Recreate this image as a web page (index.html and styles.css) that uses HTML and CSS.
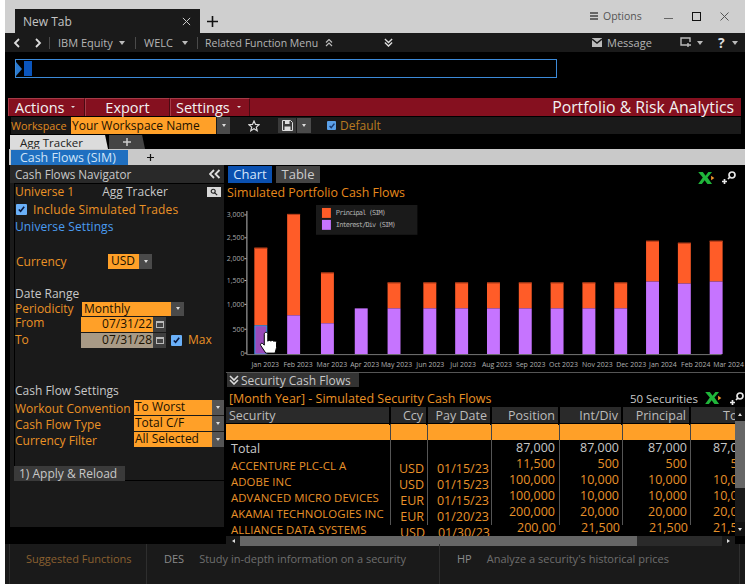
FILE: index.html
```html
<!DOCTYPE html>
<html lang="en">
<head>
<meta charset="utf-8">
<title>Portfolio &amp; Risk Analytics</title>
<link rel="stylesheet" href="styles.css">
</head>
<body>
<div class="app">
  <header class="titlebar">
    <div class="newtab"><span>New Tab</span><svg class="tabx" viewBox="0 0 10 10"><path d="M1 1l8 8M9 1l-8 8"/></svg></div>
    <svg class="plus" viewBox="0 0 11 11"><path d="M5.500 0v11M0 5.500h11"/></svg>
    <div class="winctl">
      <svg class="burger" viewBox="0 0 8 8"><path d="M0 1h8M0 4h8M0 7h8"/></svg>
      <span class="options">Options</span>
      <span class="min"></span>
      <span class="max"></span>
      <svg class="close" viewBox="0 0 9 9"><path d="M.5.5l8 8M8.500.5l-8 8"/></svg>
    </div>
  </header>

  <nav class="navbar">
    <svg class="chev" viewBox="0 0 8 10"><path d="M6 1L2 5l4 4"/></svg>
    <svg class="chev chev2" viewBox="0 0 8 10"><path d="M2 1l4 4-4 4"/></svg>
    <i class="nsep s1"></i>
    <span class="nt nt1">IBM Equity</span><b class="caret c1"></b>
    <i class="nsep s2"></i>
    <span class="nt nt2">WELC</span><b class="caret c2"></b>
    <i class="nsep s3"></i>
    <span class="nt nt3">Related Function Menu</span>
    <svg class="dbl d1" viewBox="0 0 8 8"><path d="M1 3.500l3-3 3 3M1 7l3-3 3 3"/></svg>
    <svg class="dbl d2" viewBox="0 0 10 10"><path d="M1 1l4 4 4-4M1 5l4 4 4-4"/></svg>
    <svg class="env" viewBox="0 0 10 9"><path d="M0 0h10v9H0z" fill="#bbb"/><path d="M0 1l5 4 5-4" fill="none" stroke="#1a1a1a" stroke-width="1.400"/></svg>
    <span class="nt nt4">Message</span>
    <svg class="share" viewBox="0 0 12 11"><path d="M8 8H1V1h9v4M8 6v4M6 8h5" fill="none" stroke="#bbb" stroke-width="1.400"/></svg>
    <b class="caret c3"></b>
    <span class="help">?</span>
    <b class="caret c4"></b>
  </nav>

  <div class="cmdarea">
    <div class="cmd"><b class="cmdtri"></b><b class="cmdblock"></b></div>
  </div>

  <div class="redbar">
    <div class="rbtn rb1">Actions<b class="mini"></b></div>
    <div class="rbtn rb2">Export</div>
    <div class="rbtn rb3">Settings<b class="mini"></b></div>
    <div class="apptitle">Portfolio &amp; Risk Analytics</div>
  </div>

  <div class="wsbar">
    <span class="wslabel">Workspace</span>
    <span class="field wsfield">Your Workspace Name</span><b class="drop wsdrop"></b>
    <svg class="star" viewBox="0 0 12 12"><path d="M6 1l1.500 3.400 3.600.3-2.800 2.400.9 3.600L6 8.800l-3.200 1.900.9-3.600L.9 4.700l3.600-.3z"/></svg>
    <span class="savebtn"><svg viewBox="0 0 11 11"><path d="M.5.500h8l2 2v8H.5z" fill="#3a3a3a" stroke="#ddd"/><path d="M3 1h4.500v3H3z" fill="#ddd"/><path d="M2.500 6.500h6V10h-6z" fill="#ddd"/></svg></span>
    <b class="drop savedrop"></b>
    <span class="check small"><svg viewBox="0 0 10 10"><path d="M2 5l2 2 4-5"/></svg></span>
    <span class="wsdefault">Default</span>
  </div>

  <div class="tabsrow">
    <div class="tab1">Agg Tracker</div>
    <div class="tab2"><svg viewBox="0 0 8 8"><path d="M4 0v8M0 4h8"/></svg></div>
  </div>
  <div class="subrow">
    <div class="subtab">Cash Flows (SIM)</div>
    <svg class="subplus" viewBox="0 0 7 7"><path d="M3.500 0v7M0 3.500h7"/></svg>
  </div>

  <main class="main">
    <aside class="navpanel">
      <div class="navhead"><span>Cash Flows Navigator</span>
        <svg class="collapse" viewBox="0 0 12 10"><path d="M5 1L1 5l4 4M10.500 1l-4 4 4 4"/></svg>
      </div>
      <div class="navbody">
        <div class="r r-univ"><span class="or">Universe 1</span><span class="wh aggname">Agg Tracker</span>
          <span class="searchbtn"><svg viewBox="0 0 10 10"><circle cx="4" cy="4" r="2.500"/><path d="M6 6l3 3"/></svg></span></div>
        <div class="r r-inc"><span class="check"><svg viewBox="0 0 10 10"><path d="M2 5l2 2 4-5"/></svg></span><span class="or">Include Simulated Trades</span></div>
        <div class="r r-uset"><span class="bl">Universe Settings</span></div>
        <div class="r r-cur"><span class="or lab-cur">Currency</span><span class="field usd">USD</span><b class="drop"></b></div>
        <div class="r r-dr"><span class="wh">Date Range</span></div>
        <div class="r r-per"><span class="or lab-per">Periodicity</span><span class="field monthly">Monthly</span><b class="drop"></b></div>
        <div class="r r-date"><span class="or lab-from">From</span><span class="field datef">07/31/22</span><span class="cal"><svg viewBox="0 0 8 8"><path d="M0 1h8v7H0z" fill="#bbb"/><path d="M1 3h6v4H1z" fill="#444"/></svg></span></div>
        <div class="r r-date"><span class="or lab-from lab-to">To</span><span class="field datef tan">07/31/28</span><span class="cal"><svg viewBox="0 0 8 8"><path d="M0 1h8v7H0z" fill="#bbb"/><path d="M1 3h6v4H1z" fill="#444"/></svg></span>
          <span class="check maxc"><svg viewBox="0 0 10 10"><path d="M2 5l2 2 4-5"/></svg></span><span class="or maxl">Max</span></div>
        <div class="r r-cfs"><span class="wh">Cash Flow Settings</span></div>
        <div class="r r-sel"><span class="or lab-sel">Workout Convention</span><span class="field sel">To Worst</span><b class="drop"></b></div>
        <div class="r r-sel"><span class="or lab-sel">Cash Flow Type</span><span class="field sel">Total C/F</span><b class="drop"></b></div>
        <div class="r r-sel"><span class="or lab-sel">Currency Filter</span><span class="field sel">All Selected</span><b class="drop"></b></div>
        <div class="applyrow"><span class="apply">1) Apply &amp; Reload</span></div>
      </div>
    </aside>

    <section class="rightpanel">
      <div class="viewtabs">
        <span class="vt vt-on">Chart</span><span class="vt">Table</span>
        <svg class="xl xl-top" viewBox="0 0 18 13"><path d="M0 0h5l3 4 3-4h4l-5 6 5 7h-5l-3-4-3 4H0l5-7z" fill="#1fb53a"/><path d="M14 4l3.500 2.500-3.500 2.500z" fill="#f0962a"/></svg>
        <svg class="zoomi zi-top" viewBox="0 0 15 13"><circle cx="10" cy="4" r="3"/><path d="M7.800 6.200L6 8M0 10.500h5M2.500 8v5"/></svg>
      </div>
      <div class="charttitle">Simulated Portfolio Cash Flows</div>
      <svg class="chart" viewBox="226 201 519 172">
        <g class="ylab">
          <text x="243" y="217.500">3,000</text><text x="243" y="240.500">2,500</text><text x="243" y="261.500">2,000</text><text x="243" y="283.500">1,500</text><text x="243" y="307.500">1,000</text><text x="243" y="332.500">500</text><text x="243" y="356.500">0</text>
        </g>
        <path class="axis" d="M245.500 211V355M243 215h2M243 238h2M243 259h2M243 281h2M243 305h2M243 330h2M243 354h2"/>
        <g class="or-bars">
          <rect x="253" y="248" width="13" height="78"/><rect x="286" y="214" width="13" height="102"/><rect x="320" y="273" width="13" height="51"/>
          <rect x="387" y="283" width="13" height="26"/><rect x="423" y="283" width="13" height="26"/><rect x="455" y="283" width="13" height="26"/><rect x="487" y="283" width="13" height="26"/><rect x="519" y="283" width="13" height="26"/><rect x="551" y="283" width="13" height="26"/><rect x="583" y="283" width="13" height="26"/><rect x="615" y="283" width="13" height="26"/>
          <rect x="647" y="241" width="13" height="41"/><rect x="679" y="243" width="13" height="41"/><rect x="711" y="241" width="13" height="41"/>
        </g>
        <g class="tops">
          <rect x="253" y="248" width="13" height="1"/><rect x="286" y="214" width="13" height="1"/><rect x="320" y="273" width="13" height="1"/>
          <rect x="387" y="283" width="13" height="1"/><rect x="423" y="283" width="13" height="1"/><rect x="455" y="283" width="13" height="1"/><rect x="487" y="283" width="13" height="1"/><rect x="519" y="283" width="13" height="1"/><rect x="551" y="283" width="13" height="1"/><rect x="583" y="283" width="13" height="1"/><rect x="615" y="283" width="13" height="1"/>
          <rect x="647" y="241" width="13" height="1"/><rect x="679" y="243" width="13" height="1"/><rect x="711" y="241" width="13" height="1"/>
        </g>
        <g class="pu-bars">
          <rect x="286" y="316" width="13" height="39"/><rect x="320" y="324" width="13" height="31"/><rect x="354" y="309" width="13" height="46"/>
          <rect x="387" y="309" width="13" height="46"/><rect x="423" y="309" width="13" height="46"/><rect x="455" y="309" width="13" height="46"/><rect x="487" y="309" width="13" height="46"/><rect x="519" y="309" width="13" height="46"/><rect x="551" y="309" width="13" height="46"/><rect x="583" y="309" width="13" height="46"/><rect x="615" y="309" width="13" height="46"/>
          <rect x="647" y="282" width="13" height="73"/><rect x="679" y="284" width="13" height="71"/><rect x="711" y="282" width="13" height="73"/>
        </g>
        <rect class="selbar" x="253.500" y="326.500" width="12" height="28.500"/>
        <path class="axis2" d="M245 355.500H723"/>
        <g class="xlab">
          <text x="264" y="367.500">Jan 2023</text><text x="297" y="367.500">Feb 2023</text><text x="331" y="367.500">Mar 2023</text><text x="364" y="367.500">Apr 2023</text><text x="396" y="367.500">May 2023</text><text x="430" y="367.500">Jun 2023</text><text x="463" y="367.500">Jul 2023</text><text x="497" y="367.500">Aug 2023</text><text x="531" y="367.500">Sep 2023</text><text x="564" y="367.500">Oct 2023</text><text x="598" y="367.500">Nov 2023</text><text x="632" y="367.500">Dec 2023</text><text x="664" y="367.500">Jan 2024</text><text x="697" y="367.500">Feb 2024</text><text x="730" y="367.500">Mar 2024</text>
        </g>
        <rect class="legbox" x="315" y="205" width="102" height="30"/>
        <rect class="sw-or" x="321" y="208" width="9" height="10"/><rect class="sw-pu" x="321" y="220" width="9" height="10"/>
        <text class="legt" x="335" y="215.500">Principal (SIM)</text><text class="legt" x="335" y="227.500">Interest/Div (SIM)</text>
        <path class="hand" d="M263 335c0-2.500 3.500-2.500 3.500 0v7c1-1 2.500-1 3 0 .8-1 2.500-1 3 .2 1-.6 2.800-.2 2.800 1.300v5l-1.500 5.500H264.500l-5-7.500c-1-2 1-3 2-2l1.500 1.500z"/>
      </svg>
      <div class="sechead"><span class="secbtn"><svg viewBox="0 0 10 10"><path d="M1 1l4 4 4-4M1 5l4 4 4-4"/></svg>Security Cash Flows</span></div>
      <div class="sectitle"><span class="st">[Month Year] - Simulated Security Cash Flows</span><span class="count">50 Securities</span>
        <svg class="xl xl-sec" viewBox="0 0 18 13"><path d="M0 0h5l3 4 3-4h4l-5 6 5 7h-5l-3-4-3 4H0l5-7z" fill="#1fb53a"/><path d="M14 4l3.500 2.500-3.500 2.500z" fill="#f0962a"/></svg>
        <svg class="zoomi zi-sec" viewBox="0 0 15 13"><circle cx="10" cy="4" r="3"/><path d="M7.800 6.200L6 8M0 10.500h5M2.500 8v5"/></svg>
      </div>
      <div class="tablewrap">
        <div class="table">
          <div class="row head"><span class="c sec">Security</span><span class="c ccy">Ccy</span><span class="c pay">Pay Date</span><span class="c pos">Position</span><span class="c int">Int/Div</span><span class="c pri">Principal</span><span class="c tot">Total</span></div>
          <div class="row filter"><span class="c sec"></span><span class="c ccy"></span><span class="c pay"></span><span class="c pos"></span><span class="c int"></span><span class="c pri"></span><span class="c tot"></span></div>
          <div class="row body total"><span class="c sec">Total</span><span class="c ccy"></span><span class="c pay"></span><span class="c pos">87,000</span><span class="c int">87,000</span><span class="c pri">87,000</span><span class="c tot">87,000</span></div>
          <div class="row body"><span class="c sec">ACCENTURE PLC-CL A</span><span class="c ccy">USD</span><span class="c pay">01/15/23</span><span class="c pos">11,500</span><span class="c int">500</span><span class="c pri">500</span><span class="c tot">500</span></div>
          <div class="row body"><span class="c sec">ADOBE INC</span><span class="c ccy">USD</span><span class="c pay">01/15/23</span><span class="c pos">100,000</span><span class="c int">10,000</span><span class="c pri">10,000</span><span class="c tot">10,000</span></div>
          <div class="row body"><span class="c sec">ADVANCED MICRO DEVICES</span><span class="c ccy">EUR</span><span class="c pay">01/15/23</span><span class="c pos">100,000</span><span class="c int">10,000</span><span class="c pri">10,000</span><span class="c tot">10,000</span></div>
          <div class="row body"><span class="c sec">AKAMAI TECHNOLOGIES INC</span><span class="c ccy">EUR</span><span class="c pay">01/20/23</span><span class="c pos">200,000</span><span class="c int">20,000</span><span class="c pri">20,000</span><span class="c tot">20,000</span></div>
          <div class="row body last"><span class="c sec">ALLIANCE DATA SYSTEMS</span><span class="c ccy">USD</span><span class="c pay">01/30/23</span><span class="c pos">200,00</span><span class="c int">21,500</span><span class="c pri">21,500</span><span class="c tot">21,500</span></div>
        </div>
        <div class="vscroll"><b class="vup"></b><b class="vthumb"></b><b class="vtrack"></b><b class="vdown"></b></div>
      </div>
      <div class="hscroll"><b class="hleft"></b><b class="hthumb"></b><b class="htrack"></b><b class="hright"></b></div>
    </section>
  </main>

  <footer class="footer">
    <div class="fcell f1">Suggested Functions</div>
    <div class="fcell f2"><span class="fk">DES</span><span>Study in-depth information on a security</span></div>
    <div class="fcell f3"><span class="fk">HP</span><span>Analyze a security's historical prices</span></div>
  </footer>
</div>
</body>
</html>
```

FILE: styles.css
```css
* { box-sizing: border-box; }
html, body { margin: 0; padding: 0; background: #fff; }
body { font-family: "Open Sans", "Noto Sans", sans-serif; font-size: 12px; color: #ccc; }
.app { width: 740px; height: 584px; margin-left: 5px; background: #000; overflow: hidden; position: relative; }
svg { display: block; flex: none; }

/* title bar */
.titlebar { height: 33px; background: #cfcfcf; display: flex; align-items: flex-end; padding-left: 10px; }
.newtab { width: 185px; height: 24px; background: #1a1a1a; color: #c4c4c4; display: flex; align-items: center; padding: 0 9px 0 8px; justify-content: space-between; font-size: 12px; }
.tabx { width: 9px; height: 9px; fill: none; stroke: #ccc; stroke-width: 1.1; }
.plus { width: 11px; height: 11px; fill: none; stroke: #111; stroke-width: 1.6; margin: 0 0 6px 7px; }
.winctl { margin-left: auto; height: 33px; display: flex; align-items: center; padding-bottom: 1px; }
.burger { width: 8px; height: 8px; fill: none; stroke: #444; stroke-width: 1.4; margin-right: 5px; }
.options { color: #555; font-size: 10.5px; width: 39px; }
.min { width: 9px; height: 1.500px; background: #666; margin: 5px 0 0 22px; }
.max { width: 9px; height: 9px; border: 1.4px solid #111; margin-left: 19px; }
.close { width: 9px; height: 9px; fill: none; stroke: #555; stroke-width: 1; margin-left: 19px; margin-right: 16px; }

/* nav bar */
.navbar { height: 19px; background: #1a1a1a; display: flex; align-items: center; padding-left: 8px; color: #b5b5b5; font-size: 11px; white-space: nowrap; }
.nt { flex: none; }
.chev { width: 8px; height: 10px; fill: none; stroke: #ddd; stroke-width: 1.8; }
.chev2 { margin-left: 13px; }
.nsep { width: 1px; height: 12px; background: #4a4a4a; flex: none; }
.s1 { margin-left: 7px; }
.nt1 { margin-left: 8px; width: 53px; }
.caret { width: 0; height: 0; border-left: 3.500px solid transparent; border-right: 3.500px solid transparent; border-top: 4px solid #bbb; flex: none; }
.c1 { margin-left: 8px; }
.s2 { margin-left: 10px; }
.nt2 { margin-left: 8px; width: 30px; }
.c2 { margin-left: 8px; }
.s3 { margin-left: 9px; }
.nt3 { margin-left: 7px; width: 115px; font-size: 10.5px; }
.dbl { fill: none; stroke: #bbb; stroke-width: 1.2; }
.d1 { width: 8px; height: 8px; margin-left: 5px; }
.d2 { width: 9px; height: 9px; margin-left: 51px; stroke-width: 1.5; stroke: #ddd; }
.env { width: 10px; height: 9px; margin-left: 199px; }
.nt4 { margin-left: 5px; width: 43px; }
.share { width: 12px; height: 11px; margin-left: 30px; }
.c3 { margin-left: 5px; }
.help { margin-left: 15px; color: #ddd; font-size: 14px; font-weight: 700; width: 9px; }
.c4 { margin-left: 5px; }

/* command line */
.cmdarea { height: 46px; padding: 7px 0 0 10px; }
.cmd { width: 542px; height: 19px; border: 1px solid #3c8ad8; display: flex; align-items: center; }
.cmdtri { width: 0; height: 0; border-top: 7px solid transparent; border-bottom: 7px solid transparent; border-left: 6px solid #2a7ad0; }
.cmdblock { width: 8px; height: 15px; background: #0a55bd; margin-left: 2px; }

/* red bar */
.redbar { height: 18px; margin: 0 4px 0 3px; background: #85101f; display: flex; color: #f2f2f2; font-size: 14.5px; }
.rbtn { height: 18px; display: flex; align-items: center; justify-content: center; border-top: 1px solid #a63a47; border-left: 1px solid #a63a47; border-right: 1px solid #4a0a12; padding-bottom: 1px; }
.rb1 { width: 77px; justify-content: flex-start; padding-left: 6px; }
.rb2 { width: 85px; }
.rb3 { width: 80px; justify-content: flex-start; padding-left: 5px; }
.mini { width: 0; height: 0; border-left: 2px solid transparent; border-right: 2px solid transparent; border-top: 2.500px solid #ddd; margin-left: 7px; }
.apptitle { margin-left: auto; padding-right: 7px; font-size: 15.800px; line-height: 18px; }

/* workspace */
.wsbar { height: 17px; margin: 1px 4px 0 6px; background: #1a1a1a; display: flex; align-items: center; color: #e0902a; }
.wslabel { width: 60px; font-size: 10.8px; color: #e08a20; }
.field { background: #ffa028; color: #1a1100; display: flex; align-items: center; white-space: nowrap; }
.wsfield { width: 145px; height: 17px; padding-left: 1px; font-size: 12px; }
.drop { width: 13px; height: 15px; background: #4a4a4a; flex: none; display: flex; align-items: center; justify-content: center; }
.drop::after { content: ""; border-left: 2.500px solid transparent; border-right: 2.500px solid transparent; border-top: 3px solid #ddd; }
.wsdrop { margin-left: 1px; height: 17px; }
.star { width: 12px; height: 12px; margin-left: 18px; fill: none; stroke: #ddd; stroke-width: 1.2; }
.savebtn { width: 18px; height: 15px; margin-left: 18px; background: #3a3a3a; display: flex; align-items: center; justify-content: center; }
.savebtn svg { width: 11px; height: 11px; }
.savedrop { margin-left: 1px; width: 14px; }
.check { width: 11px; height: 11px; background: #6ab0f8; border-radius: 1px; display: flex; flex: none; align-items: center; justify-content: center; }
.check svg { width: 9px; height: 9px; fill: none; stroke: #0a1a40; stroke-width: 1.8; }
.check.small { width: 9px; height: 9px; margin-left: 16px; background: #5aa0e8; }
.check.small svg { width: 8px; height: 8px; stroke: #1a3a70; }
.wsdefault { margin-left: 4px; font-size: 12px; color: #b87a20; }

/* tabs */
.tabsrow { height: 14px; margin-top: 1px; padding-left: 5px; display: flex; gap: 1px; }
.tab1 { width: 98px; height: 14px; background: #dcdcdc; color: #222; font-size: 11.5px; padding-left: 10px; line-height: 15px; clip-path: polygon(0 0, 97% 0, 100% 100%, 0 100%); }
.tab2 { width: 36px; height: 14px; background: #444; display: flex; align-items: center; justify-content: center; clip-path: polygon(0 0, 92% 0, 100% 100%, 0 100%); }
.tab2 svg { width: 8px; height: 8px; fill: none; stroke: #ccc; stroke-width: 1.5; }
.subrow { height: 16px; margin-left: 4px; background: #c9c9c9; display: flex; align-items: center; padding-left: 2px; }
.subtab { width: 117px; height: 15px; margin-top: 1px; background: #1f6fc0; color: #cfe4f8; font-size: 12.4px; padding-left: 9px; line-height: 15px; white-space: nowrap; }
.subplus { width: 7px; height: 7px; margin-left: 19px; fill: none; stroke: #111; stroke-width: 1.2; }

/* main */
.main { display: flex; height: 379px; padding-left: 5px; gap: 2px; }
.navpanel { width: 214px; height: 362px; background: #1a1a1a; color: #ccc; font-size: 12px; }
.navhead { height: 18px; background: #292929; padding-left: 5px; display: flex; align-items: center; justify-content: space-between; color: #c8c8c8; font-size: 11.7px; }
.collapse { width: 12px; height: 10px; fill: none; stroke: #ddd; stroke-width: 1.8; margin-right: 3px; }
.navbody { height: 298px; margin-left: 4px; border-left: 1px solid #000; border-top: 1px solid #000; border-bottom: 1px solid #000; position: relative; }
.r { display: flex; align-items: center; height: 16px; white-space: nowrap; line-height: 14px; }
.or { color: #ea9226; }
.wh { color: #c8c8c8; }
.bl { color: #4a9cf0; }
.r-univ { height: 16px; }
.aggname { margin-left: 28px; }
.searchbtn { width: 14px; height: 10px; background: #d8d8d8; margin-left: auto; margin-right: 3px; display: flex; align-items: center; justify-content: center; }
.searchbtn svg { width: 8px; height: 8px; fill: none; stroke: #222; stroke-width: 1.4; }
.r-inc { margin-top: 1px; height: 17px; }
.r-inc .check { margin-right: 6px; margin-left: 1px; }
.r-inc .or { letter-spacing: .17px; }
.r-uset { height: 17px; letter-spacing: .1px; }
.r-cur { margin-top: 18px; height: 16px; }
.lab-cur { width: 92px; margin-left: 1px; padding-top: 1px; }
.usd { width: 31px; height: 15px; padding-left: 3px; }
.r-dr { margin-top: 16px; height: 16px; padding-top: 1px; }
.r-per { height: 15px; }
.lab-per { width: 67px; }
.monthly { width: 89px; height: 14px; padding-left: 2px; }
.r-per .drop { height: 14px; }
.r-date { height: 16px; }
.lab-from { width: 66px; align-self: flex-start; line-height: 12px; padding-top: 1px; }
.lab-to { padding-top: 2px; }
.datef { width: 72px; height: 15px; justify-content: flex-end; padding-right: 1px; }
.tan { background: #a89a86; }
.cal { width: 13px; height: 15px; background: #3f3f3f; display: flex; align-items: center; justify-content: center; }
.cal svg { width: 8px; height: 8px; }
.maxc { margin-left: 5px; }
.maxl { margin-left: 6px; }
.r-cfs { margin-top: 34px; height: 17px; }
.r-sel { height: 16px; }
.lab-sel { width: 119px; padding-top: 3px; }
.sel { width: 78px; height: 15px; padding-left: 1px; }
.r-sel .drop { width: 12px; background: #555; }
.applyrow { position: absolute; left: -1px; bottom: -1px; }
.apply { display: block; width: 111px; height: 15px; background: #3a3a3a; color: #c8c8c8; padding-left: 5px; line-height: 15px; }

/* right */
.rightpanel { width: 519px; padding-top: 1px; }
.viewtabs { height: 17px; display: flex; gap: 4px; padding-left: 2px; align-items: flex-start; }
.vt { width: 44px; height: 17px; background: #444; color: #ccc; font-size: 13px; text-align: center; line-height: 17px; }
.vt-on { background: #0a50b0; color: #d5e6fa; }
.xl { width: 17px; height: 12px; }
.xl-top { margin: 6px 0 0 auto; }
.zoomi { width: 15px; height: 13px; fill: none; stroke: #e8e8e8; stroke-width: 1.7; }
.zi-top { margin: 5px 8px 0 3px; }
.charttitle { height: 18px; color: #e6891c; font-size: 12.4px; line-height: 19px; padding-left: 1px; white-space: nowrap; }
.chart { width: 519px; height: 172px; border-bottom: 1px solid #555; }
.ylab text { font-size: 7px; fill: #aaa; text-anchor: end; font-family: "Open Sans", sans-serif; }
.xlab text { font-size: 7px; fill: #b0b0b0; text-anchor: middle; font-family: "Open Sans", sans-serif; }
.axis { fill: none; stroke: #bbb; stroke-width: 1; }
.axis2 { fill: none; stroke: #777; stroke-width: 1; }
.or-bars rect { fill: #ff5c28; }
.tops rect { fill: #b03a18; }
.pu-bars rect { fill: #c674ff; }
.selbar { fill: #9b4cbc; stroke: #3a9be8; stroke-width: 1; }
.legbox { fill: #1a1a1a; }
.sw-or { fill: #ff5c28; }
.sw-pu { fill: #c674ff; }
.legt { font-size: 7px; fill: #b0b0b0; font-family: "DejaVu Sans Mono", monospace; letter-spacing: -.9px; }
.hand { fill: #fff; stroke: #000; stroke-width: 1; }

.sechead { height: 14px; padding-left: 1px; }
.secbtn { display: flex; align-items: center; width: 132px; height: 14px; background: #333; color: #c8c8c8; font-size: 12px; white-space: nowrap; line-height: 13px; }
.secbtn svg { width: 10px; height: 10px; fill: none; stroke: #ddd; stroke-width: 1.6; margin: 0 2px; }
.sectitle { height: 20px; display: flex; align-items: center; padding: 2px 0 0 3px; white-space: nowrap; }
.st { color: #ea9226; font-size: 12.5px; }
.count { margin-left: auto; color: #c8c8c8; font-size: 11.5px; }
.xl-sec { margin: 0 0 0 7px; }
.zi-sec { margin: 0 0 0 8px; }

.tablewrap { height: 129px; display: flex; }
.table { width: 509px; overflow: hidden; flex: none; }
.row { display: grid; grid-template-columns: 165px 37px 64px 68px 63px 68px 64px; width: 529px; height: 16px; }
.c { display: block; white-space: nowrap; text-align: right; padding-right: 3px; border-right: 1px solid #555; }
.head { height: 17px; background: #2a2a2a; color: #bcbcbc; line-height: 18px; border-bottom: 1px solid #000; font-size: 12.5px; }
.head .c { border-right: 2px solid #000; }
.head .sec { text-align: left; padding-left: 3px; }
.head .tot { border: 0; text-align: left; padding-left: 32px; }
.filter { background: #ffa028; height: 16px; }
.filter .c { border-right: 1px solid #444; }
.body { color: #e8922a; font-size: 12.5px; line-height: 16px; }
.body .sec { text-align: left; padding: 2px 0 0 5px; font-size: 11.4px; letter-spacing: .06px; }
.total .sec { font-size: 12.5px; padding-top: 1px; }
.body .ccy, .body .pay { padding-top: 5px; }
.body .pos { padding-right: 4px; }
.total .sec, .total .pos, .total .int, .total .pri, .total .tot { color: #c8c8c8; }
.total { height: 16px; }
.body .tot { border: 0; }
.last .c { border-right: 0; }
.body .pay { padding-right: 2px; }

.vscroll { width: 10px; height: 129px; display: flex; flex-direction: column; background: #1a1a1a; }
.vup, .vdown { height: 14px; background: #111; display: flex; align-items: center; justify-content: center; flex: none; }
.vup::after { content: ""; border-left: 2px solid transparent; border-right: 2px solid transparent; border-bottom: 3px solid #ddd; }
.vdown::after { content: ""; border-left: 2px solid transparent; border-right: 2px solid transparent; border-top: 3px solid #ddd; }
.vthumb { height: 67px; background: #666; flex: none; }
.vtrack { flex: 1; }
.hscroll { height: 10px; width: 509px; display: flex; background: #2a2a2a; }
.hleft, .hright { background: #1a1a1a; display: flex; align-items: center; justify-content: center; flex: none; }
.hleft { width: 14px; }
.hright { width: 13px; }
.hleft::after { content: ""; border-top: 2px solid transparent; border-bottom: 2px solid transparent; border-right: 3px solid #ddd; }
.hright::after { content: ""; border-top: 2px solid transparent; border-bottom: 2px solid transparent; border-left: 3px solid #ddd; }
.hthumb { width: 397px; background: #666; flex: none; }
.htrack { flex: 1; }

/* footer */
.footer { height: 40px; background: #1a1a1a; display: flex; align-items: stretch; font-size: 11px; color: #6e6e6e; padding-left: 4px; }
.fcell { display: flex; align-items: center; border-left: 1px solid #2e2e2e; padding-bottom: 11px; white-space: nowrap; }
.f1 { width: 137px; padding-left: 16px; color: #8a6030; }
.f2 { width: 293px; padding-left: 17px; }
.f3 { width: 301px; padding-left: 17px; border-right: 1px solid #2e2e2e; }
.fk { color: #8a8a8a; margin-right: 15px; }
```
